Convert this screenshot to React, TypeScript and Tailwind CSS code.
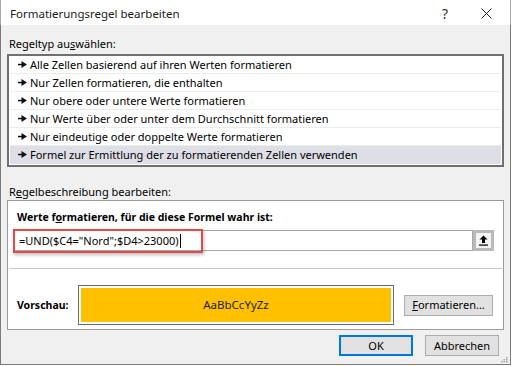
import React from "react";

const font = { fontFamily: '"Noto Sans", "Open Sans", Arial, sans-serif' };

const ruleTypes = [
  "Alle Zellen basierend auf ihren Werten formatieren",
  "Nur Zellen formatieren, die enthalten",
  "Nur obere oder untere Werte formatieren",
  "Nur Werte über oder unter dem Durchschnitt formatieren",
  "Nur eindeutige oder doppelte Werte formatieren",
  "Formel zur Ermittlung der zu formatierenden Zellen verwenden",
];

// the small "dash + triangle" marker in front of each rule type
function Bullet() {
  return (
    <svg width="9" height="7" viewBox="0 0 9 7" className="shrink-0">
      <rect x="0" y="2.8" width="4" height="1.5" fill="#111" />
      <path d="M3.5 0 L9 3.5 L3.5 7 Z" fill="#111" />
    </svg>
  );
}

export default function App() {
  return (
    <div className="w-[512px] h-[366px] bg-white text-[11px] text-black leading-[16px]" style={font}>
      <div className="w-[511px] h-[365px] flex flex-col">
        {/* title bar */}
        <div className="h-[30px] bg-white flex items-center pl-[9px] pt-[2px] border-l border-r border-[#aaaaaa]">
          <span className="text-[11.5px] text-[#1a1a1a]">Formatierungsregel bearbeiten</span>
          <span className="ml-auto text-[14px] text-[#333] mr-[33px]">?</span>
          <svg width="11" height="11" viewBox="0 0 11 11" className="mr-[18px]">
            <path d="M0.5 0.5 L10.5 10.5 M10.5 0.5 L0.5 10.5" stroke="#222" strokeWidth="1" />
          </svg>
        </div>

        {/* body */}
        <div className="flex-1 bg-[#f0f0f0] border-l border-r border-b border-[#7a7a7a] px-[6px] flex flex-col">
          <div className="mt-[11px] mb-[2px] pl-[2px] h-[16px]">
            Regeltyp au<span className="underline">s</span>wählen:
          </div>

          <div className="h-[113px] border-2 border-[#6f6f6f] bg-white px-[1px] flex flex-col">
            {ruleTypes.map((t, i) => (
              <div
                key={t}
                className={`h-[18px] shrink-0 flex items-center gap-[3px] pl-[8px] border-b ${
                  i === ruleTypes.length - 1 ? "bg-[#dedee6] border-transparent" : "border-[#ececec]"
                }`}
              >
                <Bullet />
                <span>{t}</span>
              </div>
            ))}
          </div>

          <div className="mt-[17px] pl-[2px] h-[16px]">
            R<span className="underline">e</span>gelbeschreibung bearbeiten:
          </div>

          <div className="h-[130px] border border-[#9a9a9a] bg-white flex flex-col">
            <div className="mt-[8px] pl-[9px] font-bold text-[10.5px]">
              Werte f<span className="underline">o</span>rmatieren, für die diese Formel wahr ist:
            </div>

            <div className="mt-[5px] ml-[5px] flex items-center">
              <div className="relative w-[460px] h-[21px] border border-[#a8a8a8] bg-white flex items-center pl-[5px]">
                <span>=UND($C4="Nord";$D4&gt;23000)</span>
                <span className="w-[1px] h-[14px] bg-black ml-[1px]" />
                {/* red highlight around the formula */}
                <div className="absolute left-[-1px] top-[-2px] w-[190px] h-[24px] border-2 border-[#e24a4a] shadow-[1px_2px_3px_rgba(0,0,0,0.25)]" />
              </div>
              <div className="w-[21px] h-[21px] border-[3px] border-[#b9b9b9] bg-[#f4f4f4] flex items-center justify-center">
                <svg width="9" height="11" viewBox="0 0 9 11">
                  <path d="M4.5 0.5 L8.5 4.5 L6 4.5 L6 8 L3 8 L3 4.5 L0.5 4.5 Z" fill="#000" />
                  <rect x="0" y="9.5" width="9" height="1.2" fill="#000" />
                </svg>
              </div>
            </div>

            <div className="mt-[17px] mx-[1px] h-[1px] bg-[#c8c8c8]" />

            <div className="mt-[16px] flex items-center">
              <span className="pl-[9px] w-[70px] font-bold text-[10.5px]">Vorschau:</span>
              <div className="w-[316px] h-[40px] border border-[#6a6a6a] p-[2px] bg-white">
                <div className="w-full h-full bg-[#ffc000] flex items-center justify-center text-[#222] text-[11.5px]">
                  AaBbCcYyZz
                </div>
              </div>
              <div className="ml-[10px] w-[89px] h-[21px] bg-[#e1e1e1] border border-[#adadad] flex items-center justify-center">
                <span>
                  <span className="underline">F</span>ormatieren...
                </span>
              </div>
            </div>
          </div>

          <div className="mt-[5px] flex justify-end gap-[12px] pr-[5px]">
            <div className="w-[74px] h-[21px] bg-[#e1e1e1] border-2 border-[#0078d7] flex items-center justify-center">
              OK
            </div>
            <div className="w-[74px] h-[21px] bg-[#e1e1e1] border border-[#adadad] flex items-center justify-center">
              Abbrechen
            </div>
          </div>

          {/* resize grip */}
          <div className="mt-auto mb-[1px] mr-[-4px] self-end">
            <svg width="7" height="7" viewBox="0 0 7 7">
              <rect x="5" y="1" width="1.5" height="1.5" fill="#a0a0a0" />
              <rect x="2.5" y="3" width="1.5" height="1.5" fill="#a0a0a0" />
              <rect x="5" y="3" width="1.5" height="1.5" fill="#a0a0a0" />
              <rect x="0" y="5" width="1.5" height="1.5" fill="#a0a0a0" />
              <rect x="2.5" y="5" width="1.5" height="1.5" fill="#a0a0a0" />
              <rect x="5" y="5" width="1.5" height="1.5" fill="#a0a0a0" />
            </svg>
          </div>
        </div>
      </div>
    </div>
  );
}
